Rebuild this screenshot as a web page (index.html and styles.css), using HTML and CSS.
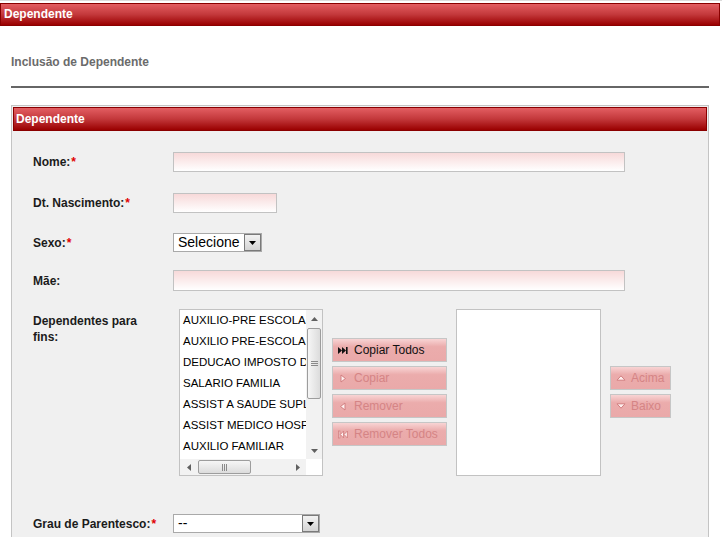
FILE: index.html
```html
<!DOCTYPE html>
<html lang="pt-BR">
<head>
<meta charset="utf-8">
<title>Dependente</title>
<link rel="stylesheet" href="styles.css">
</head>
<body>
<div class="page">
  <div class="titlebar">Dependente</div>
  <div class="subtitle">Inclusão de Dependente</div>
  <div class="rule"></div>

  <div class="panel">
    <div class="panel-head">Dependente</div>
    <div class="form">

      <div class="row r-nome">
        <label class="lbl">Nome:<span class="req">*</span></label>
        <div class="ctl"><input class="txt w-long" type="text"></div>
      </div>

      <div class="row r-nasc">
        <label class="lbl">Dt. Nascimento:<span class="req">*</span></label>
        <div class="ctl"><input class="txt w-date" type="text"></div>
      </div>

      <div class="row r-sexo">
        <label class="lbl">Sexo:<span class="req">*</span></label>
        <div class="ctl">
          <div class="select w-sexo">
            <span class="sel-text">Selecione</span>
            <span class="sel-btn"><svg width="7" height="4" viewBox="0 0 7 4"><path d="M0 0H7L3.5 4Z" fill="#000"/></svg></span>
          </div>
        </div>
      </div>

      <div class="row r-mae">
        <label class="lbl">Mãe:</label>
        <div class="ctl"><input class="txt w-long h21" type="text"></div>
      </div>

      <div class="row r-fins">
        <label class="lbl lbl-top">Dependentes para fins:</label>
        <div class="ctl dual">
          <div class="listbox">
            <ul class="items">
              <li>AUXILIO-PRE ESCOLAR</li>
              <li>AUXILIO PRE-ESCOLAR</li>
              <li>DEDUCAO IMPOSTO DE RENDA</li>
              <li>SALARIO FAMILIA</li>
              <li>ASSIST A SAUDE SUPLEMENTAR</li>
              <li>ASSIST MEDICO HOSPITALAR</li>
              <li>AUXILIO FAMILIAR</li>
            </ul>
            <div class="vscroll">
              <span class="sb-btn"><svg width="7" height="4" viewBox="0 0 7 4"><path d="M0 4H7L3.5 0Z" fill="#606060"/></svg></span>
              <span class="vthumb"><svg width="7" height="5" viewBox="0 0 7 5"><path d="M0 .5H7M0 2.5H7M0 4.5H7" stroke="#8a8a8a" stroke-width="1"/></svg></span>
              <span class="sb-fill"></span>
              <span class="sb-btn"><svg width="7" height="4" viewBox="0 0 7 4"><path d="M0 0H7L3.5 4Z" fill="#606060"/></svg></span>
            </div>
            <div class="hscroll">
              <span class="sb-btn"><svg width="4" height="7" viewBox="0 0 4 7"><path d="M4 0V7L0 3.5Z" fill="#606060"/></svg></span>
              <span class="hthumb"><svg width="5" height="7" viewBox="0 0 5 7"><path d="M.5 0V7M2.5 0V7M4.5 0V7" stroke="#8a8a8a" stroke-width="1"/></svg></span>
              <span class="sb-fill"></span>
              <span class="sb-btn"><svg width="4" height="7" viewBox="0 0 4 7"><path d="M0 0V7L4 3.5Z" fill="#606060"/></svg></span>
            </div>
            <div class="corner"></div>
          </div>

          <div class="btncol">
            <button class="pbtn" type="button">
              <svg class="ico" width="10" height="9" viewBox="0 0 10 9"><path d="M0 1L4 4.5L0 8Z M4 1L8 4.5L4 8Z" fill="#111"/><rect x="8" y="1" width="1.6" height="7" fill="#111"/></svg>
              <span>Copiar Todos</span>
            </button>
            <button class="pbtn off" type="button">
              <svg class="ico" width="10" height="9" viewBox="0 0 10 9"><path d="M3 1L7.5 4.5L3 8Z" fill="#fdeeee" stroke="#d27f80" stroke-width="1"/></svg>
              <span>Copiar</span>
            </button>
            <button class="pbtn off" type="button">
              <svg class="ico" width="10" height="9" viewBox="0 0 10 9"><path d="M7 1L2.5 4.5L7 8Z" fill="#fdeeee" stroke="#d27f80" stroke-width="1"/></svg>
              <span>Remover</span>
            </button>
            <button class="pbtn off" type="button">
              <svg class="ico" width="10" height="9" viewBox="0 0 10 9"><rect x="0.5" y="1" width="1.4" height="7" fill="#fdeeee" stroke="#d27f80" stroke-width=".8"/><path d="M5.6 1L2.3 4.5L5.6 8Z M9.4 1L6 4.5L9.4 8Z" fill="#fdeeee" stroke="#d27f80" stroke-width=".9"/></svg>
              <span>Remover Todos</span>
            </button>
          </div>

          <div class="listbox target"></div>

          <div class="btncol order">
            <button class="pbtn off small" type="button">
              <svg class="ico" width="10" height="8" viewBox="0 0 10 8"><path d="M1 6.2L5 1.8L9 6.2Z" fill="#fdeeee" stroke="#d27f80" stroke-width="1"/></svg>
              <span>Acima</span>
            </button>
            <button class="pbtn off small" type="button">
              <svg class="ico" width="10" height="8" viewBox="0 0 10 8"><path d="M1 1.8L5 6.2L9 1.8Z" fill="#fdeeee" stroke="#d27f80" stroke-width="1"/></svg>
              <span>Baixo</span>
            </button>
          </div>
        </div>
      </div>

      <div class="row r-grau">
        <label class="lbl">Grau de Parentesco:<span class="req">*</span></label>
        <div class="ctl">
          <div class="select w-grau">
            <span class="sel-text">--</span>
            <span class="sel-btn"><svg width="7" height="4" viewBox="0 0 7 4"><path d="M0 0H7L3.5 4Z" fill="#000"/></svg></span>
          </div>
        </div>
      </div>

    </div>
  </div>
</div>
</body>
</html>
```

FILE: styles.css
```css
* { box-sizing: border-box; }

body {
  margin: 0;
  background: #fff;
  font-family: "Liberation Sans", Arial, sans-serif;
  font-size: 12px;
  color: #1b1b1b;
}

.page {
  padding-top: 3px;
  border-top: 1px solid #dcdcdc;
}

.titlebar {
  height: 23px;
  margin-top: -1px;
  margin-right: 2px;
  border: 1px solid #8a0000;
  background: linear-gradient(#e35e62, #c3383b 50%, #9a0000);
  color: #fff;
  font-weight: bold;
  font-size: 12px;
  line-height: 21px;
  padding-left: 3px;
}

.subtitle {
  margin: 29px 0 0 11px;
  line-height: 14px;
  font-weight: bold;
  color: #6b6b6b;
}

.rule {
  margin: 17px 13px 0 11px;
  height: 2px;
  background: #666;
}

.panel {
  margin: 17px 13px 0 11px;
  border: 1px solid #c4c4c4;
  background: #f0f0f0;
  padding: 1px;
  padding-bottom: 40px;
}

.panel-head {
  height: 24px;
  border: 1px solid #8a0000;
  background: linear-gradient(#e35e62, #c3383b 50%, #9a0000);
  color: #fff;
  font-weight: bold;
  line-height: 22px;
  padding-left: 2px;
}

.form {
  padding: 21px 0 0 20px;
}

.row {
  display: grid;
  grid-template-columns: 140px 1fr;
  align-items: center;
}

.r-nome { margin-bottom: 21px; }
.r-nasc { margin-bottom: 20px; }
.r-sexo { margin-bottom: 18px; }
.r-mae  { margin-bottom: 18px; }
.r-fins { margin-bottom: 38px; align-items: start; }

.lbl {
  font-weight: bold;
  color: #1b1b1b;
  line-height: 16px;
  padding-right: 12px;
}

.lbl-top { padding-top: 4px; }

.req {
  color: #e00000;
  margin-left: 1px;
}

.ctl { display: flex; }

.txt {
  height: 20px;
  margin: 0;
  border: 1px solid #c2c2c2;
  background: linear-gradient(#f7d9d9, #ffffff);
  font: 12px "Liberation Sans", Arial, sans-serif;
  padding: 0 3px;
  outline: none;
}

.h21 { height: 21px; }
.w-long { width: 452px; }
.w-date { width: 104px; }

.select {
  height: 19px;
  border: 1px solid #a9a9a9;
  background: #fff;
  display: flex;
  align-items: center;
  font-size: 14px;
  color: #000;
}

.w-sexo { width: 89px; }
.w-grau { width: 147px; }

.sel-text {
  padding-left: 4px;
  flex: 1;
  line-height: 17px;
}

.sel-btn {
  width: 17px;
  height: 17px;
  border: 1px solid #7a7a7a;
  background: linear-gradient(#f2f2f2, #d4d4d4);
  display: flex;
  align-items: center;
  justify-content: center;
}

/* dual list */
.dual {
  padding-left: 6px;
  gap: 9px;
  align-items: flex-start;
}

.listbox {
  width: 144px;
  height: 167px;
  border: 1px solid #c2c2c2;
  background: #fff;
  display: grid;
  grid-template-columns: 1fr 16px;
  grid-template-rows: 1fr 16px;
}

.listbox.target { width: 145px; display: block; }

.items {
  list-style: none;
  margin: 0;
  padding: 0;
  overflow: hidden;
}

.items li {
  height: 21px;
  line-height: 21px;
  padding-left: 3px;
  white-space: nowrap;
  font-size: 11.5px;
  color: #000;
}

.vscroll {
  display: flex;
  flex-direction: column;
  background: #f2f2f2;
}

.hscroll {
  display: flex;
  background: #f2f2f2;
}

.sb-btn {
  flex: 0 0 17px;
  display: flex;
  align-items: center;
  justify-content: center;
}

.sb-fill { flex: 1; }

.vthumb {
  height: 71px;
  margin: 1px 1px 0 1px;
  border: 1px solid #9d9d9d;
  border-radius: 2px;
  background: linear-gradient(90deg, #f6f6f6, #dcdcdc);
  display: flex;
  align-items: center;
  justify-content: center;
}

.hthumb {
  width: 53px;
  margin: 1px 0 1px 1px;
  border: 1px solid #9d9d9d;
  border-radius: 2px;
  background: linear-gradient(#f6f6f6, #dcdcdc);
  display: flex;
  align-items: center;
  justify-content: center;
}

.corner { background: #fff; }

.btncol {
  display: flex;
  flex-direction: column;
  gap: 4px;
  padding-top: 29px;
}

.btncol.order { padding-top: 57px; }

.pbtn {
  width: 115px;
  height: 24px;
  margin: 0;
  border: 1px solid #c6c6c6;
  background: linear-gradient(#f8d4d4, #ebacac 35%, #eaa9a9);
  display: flex;
  align-items: center;
  padding: 0 0 0 5px;
  font: 12px "Liberation Sans", Arial, sans-serif;
  color: #111;
  text-align: left;
}

.pbtn.small { width: 61px; }

.pbtn .ico { flex: 0 0 auto; margin-right: 6px; }
.pbtn.small .ico { margin-right: 5px; }

.pbtn.off { color: #d58485; }
```
